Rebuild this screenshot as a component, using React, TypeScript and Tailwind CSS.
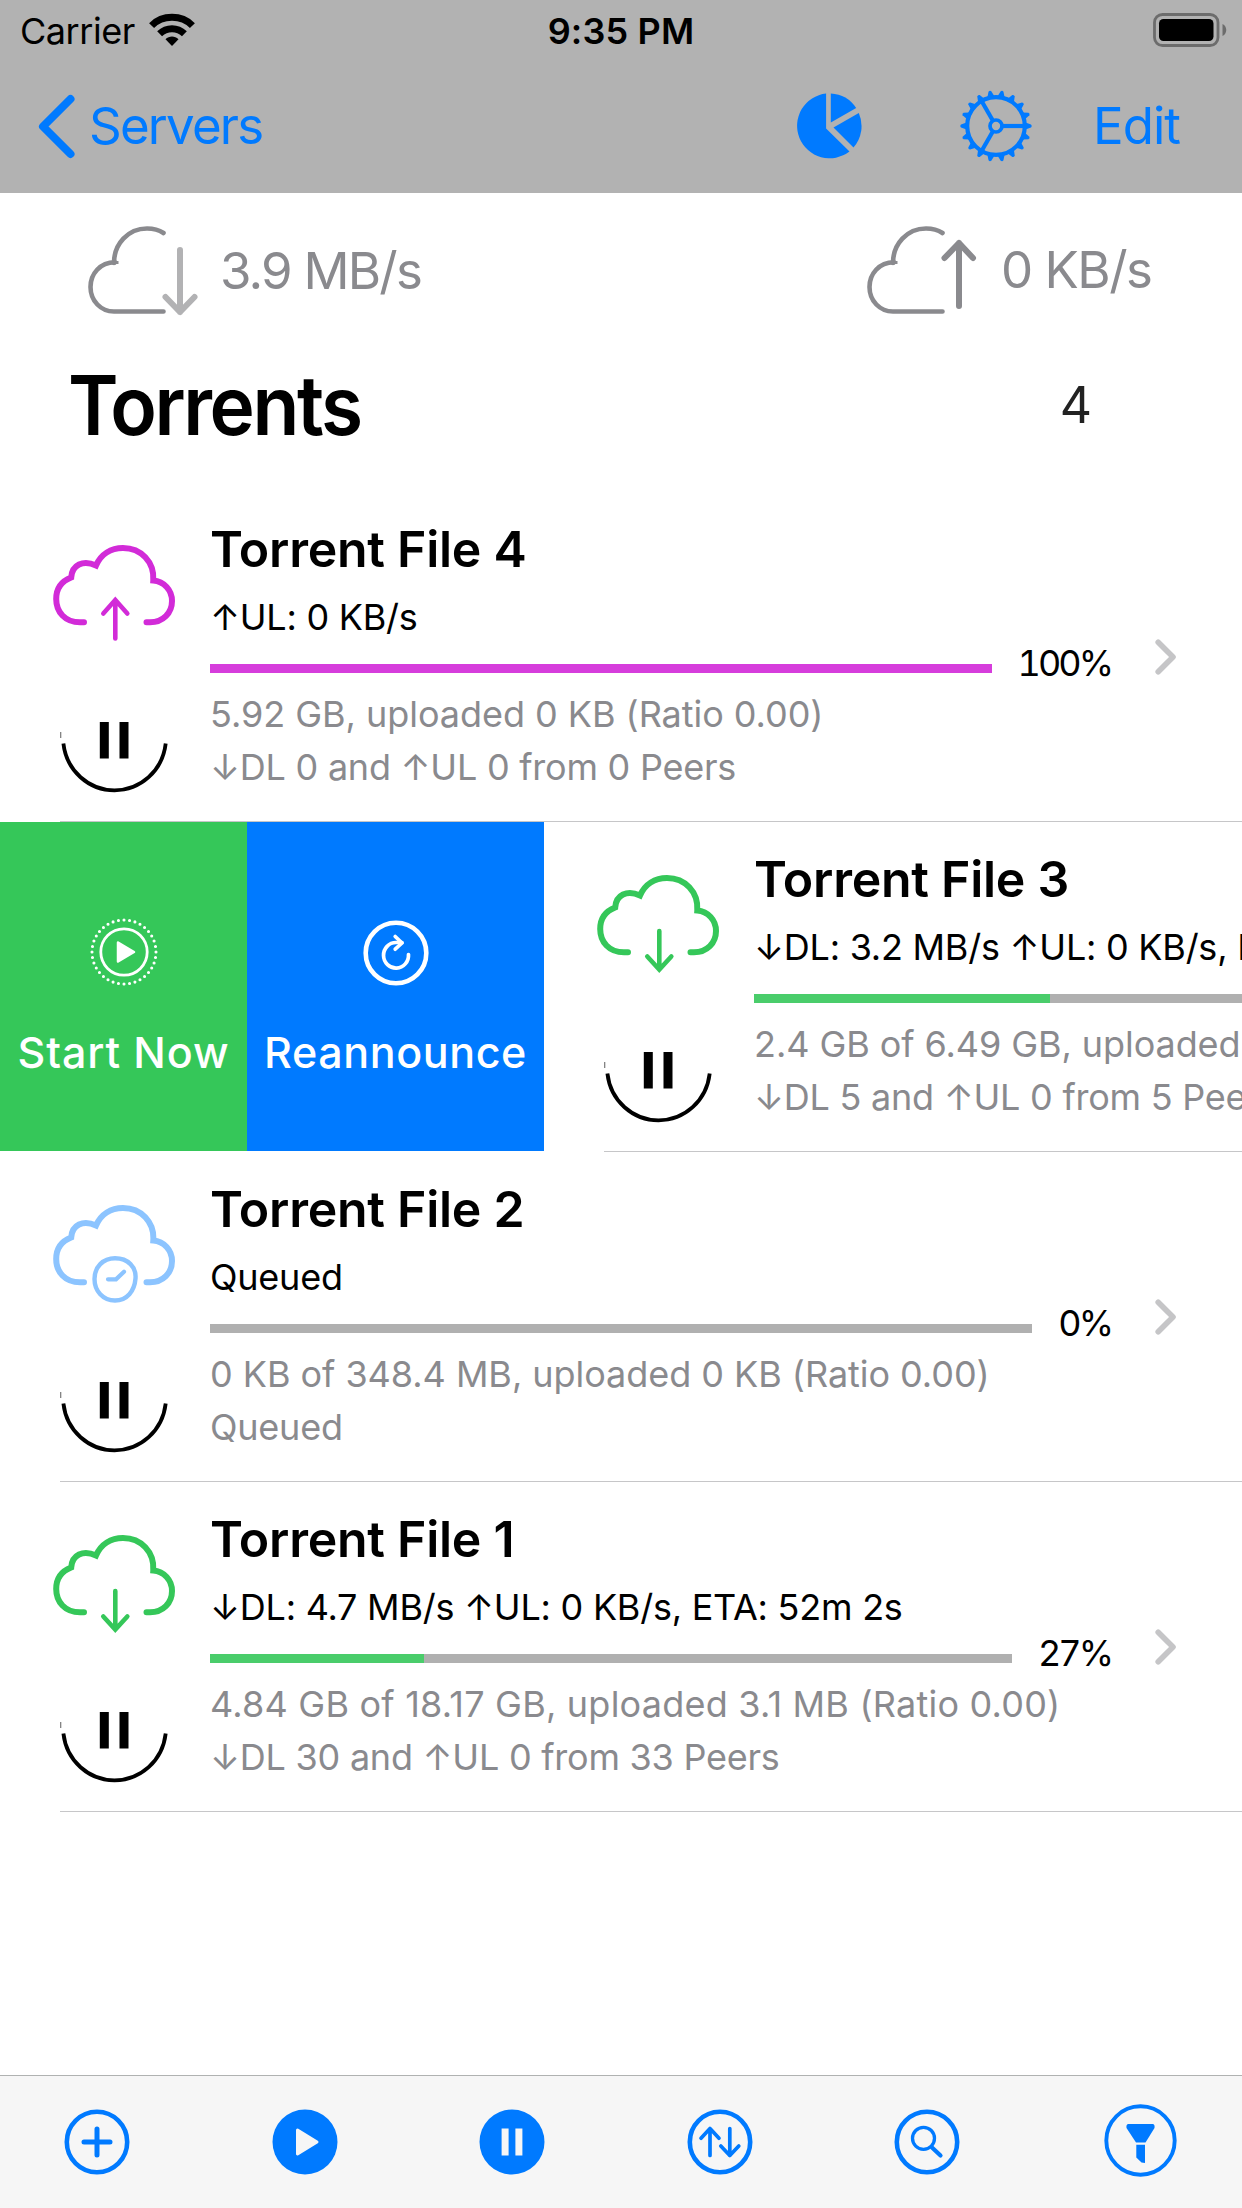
import React from "react";

type Kind = "up" | "down" | "queued";

interface Torrent {
  name: string;
  status: string;
  detail: string;
  peers: string;
  percent: string;
  kind: Kind;
  trackWidth: number;
  fillWidth: number;
  fillClass: string;
  iconClass: string;
  detailClass: string;
}

const torrent4: Torrent = {
  name: "Torrent File 4",
  status: "↑UL: 0 KB/s",
  detail: "5.92 GB, uploaded 0 KB (Ratio 0.00)",
  peers: "↓DL 0 and ↑UL 0 from 0 Peers",
  percent: "100%",
  kind: "up",
  trackWidth: 782,
  fillWidth: 782,
  fillClass: "bg-[#d63ddc]",
  iconClass: "text-[#d22bd8]",
  detailClass: "tracking-[-0.04px]",
};

const torrent3: Torrent = {
  name: "Torrent File 3",
  status: "↓DL: 3.2 MB/s ↑UL: 0 KB/s, ETA: 21m 7s",
  detail: "2.4 GB of 6.49 GB, uploaded 0 KB (Ratio 0.00)",
  peers: "↓DL 5 and ↑UL 0 from 5 Peers",
  percent: "37%",
  kind: "down",
  trackWidth: 802,
  fillWidth: 296,
  fillClass: "bg-[#4acd6b]",
  iconClass: "text-[#35c759]",
  detailClass: "tracking-[-0.08px]",
};

const torrent2: Torrent = {
  name: "Torrent File 2",
  status: "Queued",
  detail: "0 KB of 348.4 MB, uploaded 0 KB (Ratio 0.00)",
  peers: "Queued",
  percent: "0%",
  kind: "queued",
  trackWidth: 822,
  fillWidth: 0,
  fillClass: "bg-[#b0b0b0]",
  iconClass: "text-[#8cc4ff]",
  detailClass: "tracking-[-0.04px]",
};

const torrent1: Torrent = {
  name: "Torrent File 1",
  status: "↓DL: 4.7 MB/s ↑UL: 0 KB/s, ETA: 52m 2s",
  detail: "4.84 GB of 18.17 GB, uploaded 3.1 MB (Ratio 0.00)",
  peers: "↓DL 30 and ↑UL 0 from 33 Peers",
  percent: "27%",
  kind: "down",
  trackWidth: 802,
  fillWidth: 214,
  fillClass: "bg-[#4acd6b]",
  iconClass: "text-[#35c759]",
  detailClass: "tracking-[0.22px]",
};

function WifiIcon() {
  return (
    <svg width="46" height="34" viewBox="0 0 46 34" fill="none" stroke="#000">
      <path d="M2.6 12.6C13.5 1.6 32.500 1.600 43.400 12.600" strokeWidth="7" />
      <path d="M10.600 20.800C17.600 14 28.400 14 35.400 20.800" strokeWidth="7" />
      <path d="M23 33L16.500 26.300C20.200 22.600 25.800 22.600 29.500 26.300Z" fill="#000" stroke="none" />
    </svg>
  );
}

function BatteryIcon() {
  return (
    <svg width="74" height="34" viewBox="0 0 74 34">
      <rect x="1.500" y="1.500" width="63.500" height="31" rx="8" fill="none" stroke="#6c6c6c" strokeWidth="2.800" />
      <rect x="6" y="6" width="54.500" height="22" rx="4.500" fill="#000" />
      <path d="M69.500 11C74.500 13 74.500 21 69.500 23Z" fill="#6c6c6c" />
    </svg>
  );
}

function PieIcon() {
  return (
    <svg width="66" height="66" viewBox="-33 -33 66 66" fill="#007aff">
      <path d="M-2.900 -32.500A32.500 32.500 0 1 0 20.500 25.500L-2.900 2.400Z" />
      <path d="M1.800 -32.500A32.500 32.500 0 0 1 27.200 -18L1.800 -3.500Z" />
      <path d="M29.800 -13A32.500 32.500 0 0 1 24.500 21.500L4.500 1.600Z" />
    </svg>
  );
}

function GearIcon() {
  const teeth = Array.from({ length: 18 }, (_, i) => i * 20);
  return (
    <svg width="72" height="72" viewBox="-36 -36 72 72" fill="none" stroke="#007aff">
      <circle r="28.800" strokeWidth="4.200" />
      <circle r="6" strokeWidth="3.700" />
      {teeth.map((a) => (
        <path key={a} d="M29.500 -3.600L35 -1.400Q36.400 0 35 1.400L29.500 3.600Z" fill="#007aff" stroke="none" transform={`rotate(${a})`} />
      ))}
      {[0, 120, 240].map((a) => (
        <path key={a} d="M7 0H28" strokeWidth="4.200" transform={`rotate(${a})`} />
      ))}
    </svg>
  );
}

function SpeedCloud({ up }: { up?: boolean }) {
  return (
    <svg width="122" height="100" viewBox="0 0 122 100" fill="none" stroke="#8a8a8e" strokeLinecap="round">
      <path d="M83.500 13C79 10 73 8.500 67 8.500C48 8.500 34 24 34 43" strokeWidth="4.600" />
      <path d="M38.500 42.500L34 42.500" strokeWidth="3" strokeLinecap="butt" />
      <path d="M35 42.300C20 42.300 10.500 54 10.500 67C10.500 81 21 91.500 34 91.500H83.500" strokeWidth="4.600" />
      {up ? (
        <path d="M100 86V23M85.500 38L100 23L114 38" strokeWidth="6" strokeLinejoin="round" />
      ) : (
        <path d="M100 30V92M85.500 77L100 92L114.500 77" stroke="#b2b2b4" strokeWidth="6" strokeLinejoin="round" />
      )}
    </svg>
  );
}

function StatusCloud({ kind, className }: { kind: Kind; className: string }) {
  return (
    <svg width="130" height="105" viewBox="50 540 130 105" fill="none" stroke="currentColor" strokeLinecap="round" className={className}>
      <path
        d="M84 622.300H80C65 622.300 56.200 612 56.200 599C56.200 588 62 581 71.200 577.500C72 565 83 559.500 96 565.500C101 554 111 548 123 548C141 548 154.500 562 153.300 580.500C164 581.500 172 590 172 601C172 613 163 622.300 150 622.300H146.500"
        strokeWidth="6"
        strokeMiterlimit="10"
      />
      {kind === "up" && <path d="M115.300 638.500V600M103.300 613.500L115.300 600L127.300 613.500" strokeWidth="4.600" />}
      {kind === "down" && <path d="M115.300 601V639M103.300 626.500L115.300 639.500L127.300 626.500" strokeWidth="4.600" />}
      {kind === "queued" && (
        <>
          <path d="M115 598.300C128 598.300 136.500 607 135.500 618.500C134.500 631 127 640.500 115 640.500C103 640.500 94.500 631 94.500 619C94.500 607 103 598.300 115 598.300Z" strokeWidth="4.400" />
          <path d="M108 619.300H116L124 611.700" strokeWidth="4.200" />
        </>
      )}
    </svg>
  );
}

function PauseDial() {
  return (
    <svg width="110" height="76" viewBox="60 718 110 76" fill="none" stroke="#000">
      <path d="M63.400 743.500C66.500 771 89 790.300 114.500 790.300C140.500 790.300 162.500 771 165.700 743.500" strokeWidth="3.800" />
      <path d="M104.300 722V758.500M124 722V758.500" strokeWidth="9" />
      <path d="M60.700 732V738" stroke="#777" strokeWidth="1.200" />
    </svg>
  );
}

function Chevron() {
  return (
    <svg width="24" height="38" viewBox="0 0 24 38" fill="none" stroke="#c5c5c7" strokeWidth="5.600" strokeLinecap="round" strokeLinejoin="round">
      <path d="M4.200 4.200L19 19L4.200 33.800" />
    </svg>
  );
}

function TorrentRow({ t }: { t: Torrent }) {
  return (
    <div className="flex h-[330px] w-[1242px] shrink-0">
      <div className="flex w-[60px] shrink-0" />
      <div className="flex h-[330px] w-[1182px] shrink-0 border-b border-[#c6c6c8]">
        <div className="-ml-[10px] flex w-[160px] shrink-0 flex-col pt-[48px]">
          <StatusCloud kind={t.kind} className={t.iconClass} />
          <div className="mt-[73px] ml-[10px]">
            <PauseDial />
          </div>
        </div>
        <div className="flex flex-col whitespace-nowrap pt-[27px]">
          <div className="h-[60px] text-[50px] leading-[60px] font-semibold tracking-[-0.25px]">{t.name}</div>
          <div className="mt-[16px] h-[44px] text-[36px] leading-[44px] tracking-[-0.24px]">{t.status}</div>
          <div className="mt-[2px] flex h-[44px] items-start">
            <div className="flex w-[901px] justify-between">
              <div className="mt-[23px] h-[9px] bg-[#b0b0b0]" style={{ width: t.trackWidth }}>
                <div className={`h-[9px] ${t.fillClass}`} style={{ width: t.fillWidth }} />
              </div>
              <div className="text-[36px] leading-[44px] tracking-[-3px] tabular-nums">{t.percent}</div>
            </div>
            <div className="ml-[43px] -mt-[3px]">
              <Chevron />
            </div>
          </div>
          <div className={`mt-[7px] h-[44px] text-[36px] leading-[44px] text-[#8a8a8e] ${t.detailClass}`}>{t.detail}</div>
          <div className="mt-[9px] h-[44px] text-[36px] leading-[44px] tracking-[-0.24px] text-[#8a8a8e]">{t.peers}</div>
        </div>
      </div>
    </div>
  );
}

function StartNowIcon() {
  return (
    <svg width="68" height="68" viewBox="-34 -34 68 68" fill="none" stroke="#fff">
      <circle r="32" strokeWidth="3.100" strokeLinecap="round" strokeDasharray="0 10" pathLength="360" />
      <circle r="23.200" strokeWidth="2.800" />
      <path d="M-6 -9.500L10 0L-6 9.500Z" fill="#fff" strokeWidth="2.500" strokeLinejoin="round" />
    </svg>
  );
}

function ReannounceIcon() {
  return (
    <svg width="68" height="68" viewBox="-34 -34 68 68" fill="none" stroke="#fff" strokeLinecap="round" strokeLinejoin="round">
      <circle r="30.300" strokeWidth="4.600" />
      <path d="M12.500 1.500A12.500 12.800 0 1 1 0 -10.500H6" strokeWidth="3.700" />
      <path d="M-0.800 -16.500L6 -10L-0.800 -3.800" strokeWidth="3.700" />
    </svg>
  );
}

function ToolIcon({ children, solid }: { children: React.ReactNode; solid?: boolean }) {
  return (
    <svg width="66" height="66" viewBox="-33 -33 66 66" fill="none" stroke="#007aff" strokeLinecap="round" strokeLinejoin="round">
      {solid ? <circle r="32.500" fill="#007aff" stroke="none" /> : <circle r="30.200" strokeWidth="4.600" />}
      {children}
    </svg>
  );
}

export default function App() {
  return (
    <div className="flex h-[2208px] w-[1242px] flex-col overflow-hidden bg-white font-['Inter','Liberation_Sans',sans-serif] text-black">
      <header className="flex h-[193px] shrink-0 flex-col bg-[#b2b2b2]">
        <div className="grid h-[60px] grid-cols-3">
          <div className="flex pl-[20px]">
            <span className="mt-[9px] w-[129px] text-[36px] leading-[44px] tracking-[-0.45px]">Carrier</span>
            <span className="mt-[13px]">
              <WifiIcon />
            </span>
          </div>
          <div className="mt-[9px] text-center text-[36px] leading-[44px] font-semibold tracking-[0.15px]">9:35 PM</div>
          <div className="mt-[13px] flex justify-end pr-[15px]">
            <BatteryIcon />
          </div>
        </div>
        <div className="flex h-[133px] items-start text-[#007aff]">
          <svg className="mt-[33px] ml-[36px]" width="42" height="68" viewBox="0 0 42 68" fill="none" stroke="#007aff" strokeWidth="8" strokeLinecap="round" strokeLinejoin="round">
            <path d="M34.500 6L7 33.500L34.500 61" />
          </svg>
          <span className="mt-[36px] ml-[11px] text-[51px] leading-[60px] tracking-[-1.8px]">Servers</span>
          <div className="mr-[62px] ml-auto flex items-start">
            <div className="mt-[33px]">
              <PieIcon />
            </div>
            <div className="mt-[30px] ml-[98px]">
              <GearIcon />
            </div>
            <span className="mt-[36px] ml-[61px] w-[87px] text-[51px] leading-[60px] tracking-[-1px]">Edit</span>
          </div>
        </div>
      </header>

      <main className="flex flex-1 flex-col">
        <div className="flex h-[147px] items-start pt-[27px] pl-[80px] text-[51px] leading-[60px] text-[#8a8a8e]">
          <SpeedCloud />
          <span className="mt-[21px] ml-[18px] w-[639px] tracking-[-1.8px]">3.9 MB/s</span>
          <SpeedCloud up />
          <span className="mt-[20px] ml-[20px] tracking-[-1.5px]">0 KB/s</span>
        </div>
        <div className="flex h-[152px] items-start justify-between pr-[150px] pl-[68px]">
          <h1 className="mt-[16px] origin-left scale-x-[0.935] text-[82px] leading-[100px] font-semibold tracking-[-2.6px]">Torrents</h1>
          <span className="mt-[35px] text-[50px] leading-[60px] text-[#222]">4</span>
        </div>

        <TorrentRow t={torrent4} />
        <div className="flex h-[330px] overflow-hidden">
          <div className="flex h-[329px] w-[247px] shrink-0 flex-col items-center bg-[#35c759] pt-[96px] text-white">
            <StartNowIcon />
            <span className="mt-[36px] text-[43px] leading-[60px] font-[450] tracking-[0.9px] whitespace-nowrap">Start Now</span>
          </div>
          <div className="flex h-[329px] w-[297px] shrink-0 flex-col items-center bg-[#007aff] pt-[97px] text-white">
            <ReannounceIcon />
            <span className="mt-[35px] text-[43px] leading-[60px] font-[450] tracking-[0.6px] whitespace-nowrap">Reannounce</span>
          </div>
          <TorrentRow t={torrent3} />
        </div>
        <TorrentRow t={torrent2} />
        <TorrentRow t={torrent1} />
      </main>

      <footer className="flex h-[133px] shrink-0 items-start border-t border-[#b0b2b1] bg-[#f6f6f6] pt-[33px] pl-[63.5px]">
        <div className="w-[208px]">
          <ToolIcon>
            <path d="M-13 0H13M0 -13V13" strokeWidth="5" />
          </ToolIcon>
        </div>
        <div className="w-[207px]">
          <ToolIcon solid>
            <path d="M-7.500 -12L12 0L-7.500 12Z" fill="#f6f6f6" stroke="#f6f6f6" strokeWidth="3" />
          </ToolIcon>
        </div>
        <div className="w-[208px]">
          <ToolIcon solid>
            <path d="M-9 -10V10M4.800 -10V10" transform="translate(2.100 0)" stroke="#f6f6f6" strokeWidth="7" strokeLinecap="square" strokeLinejoin="round" />
          </ToolIcon>
        </div>
        <div className="w-[207px]">
          <ToolIcon>
            <path d="M-10 13.500V-13.500M-19 -3.800L-10 -13.500L-1 -3.800M9.800 -13.500V13.500M0.800 4L9.800 13.500L18.800 4" strokeWidth="3.700" />
          </ToolIcon>
        </div>
        <div className="w-[210px]">
          <ToolIcon>
            <circle cx="-3.500" cy="-3.700" r="11" strokeWidth="3.300" />
            <path d="M5 5.500L13.500 13.500" strokeWidth="4.200" />
          </ToolIcon>
        </div>
        <svg className="-mt-[5px]" width="73" height="73" viewBox="-36.500 -36.500 73 73" fill="#007aff">
          <circle r="34.200" fill="none" stroke="#007aff" strokeWidth="3.900" />
          <path d="M-12.500 -16.500H12.500Q14.500 -16 14 -12.500L5 2H-4.500L-14 -12.500Q-14.500 -16 -12.500 -16.500Z" />
          <path d="M-4.200 4.200H4.500V22.500L1 22L-4.200 17Z" />
        </svg>
      </footer>
    </div>
  );
}
